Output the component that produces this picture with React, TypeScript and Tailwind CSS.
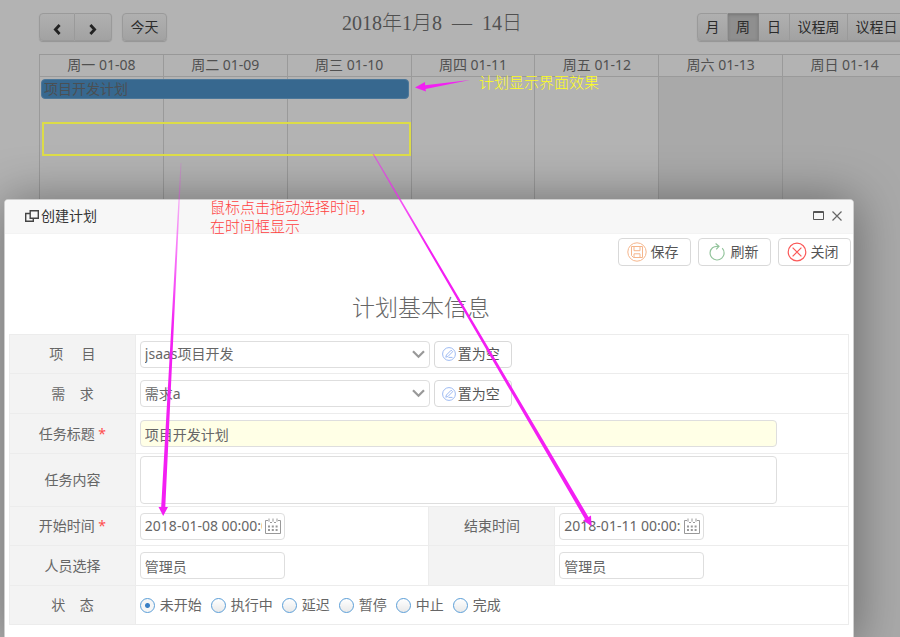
import React, { useState } from "react";

const FONT = "font-['Noto_Sans','Noto_Sans_CJK_SC',sans-serif]";

const DAYS = [
  "周一 01-08",
  "周二 01-09",
  "周三 01-10",
  "周四 01-11",
  "周五 01-12",
  "周六 01-13",
  "周日 01-14",
];

const VIEWS = ["月", "周", "日", "议程周", "议程日"];
const STATES = ["未开始", "执行中", "延迟", "暂停", "中止", "完成"];

const calButton =
  "flex h-7 items-center justify-center border-[#9a9a9a] bg-linear-to-b from-[#b0b0b0] to-[#a2a2a2] text-[#2b2b2b]";
const field =
  "rounded border border-[#dedede] bg-white text-sm text-[#666] outline-none";
const formButton =
  "flex items-center justify-center rounded-sm border border-[#d9d9d9] bg-white pr-1 text-sm text-[#555]";

function Calendar() {
  const [view, setView] = useState("周");
  return (
    <div className="-mr-[6px] ml-[39px] flex h-full flex-col pt-[13px]">
      <header className="mb-[13px] flex items-start justify-between">
        <div className="flex gap-[10px]">
          <div className="flex rounded shadow-[0_1px_1px_#949494]">
            <button aria-label="上一周" className={`${calButton} w-[36px] rounded-l border`}>
              <svg width="8" height="11" viewBox="0 0 8 11" className="mt-1" fill="none" stroke="#222" strokeWidth="2.8">
                <path d="M6.600 1 2.400 5.500l4.200 4.500" />
              </svg>
            </button>
            <button aria-label="下一周" className={`${calButton} w-[37px] rounded-r border border-l-0`}>
              <svg width="8" height="11" viewBox="0 0 8 11" className="mt-1" fill="none" stroke="#222" strokeWidth="2.8">
                <path d="M1.400 1l4.200 4.500-4.200 4.500" />
              </svg>
            </button>
          </div>
          <button className={`${calButton} w-[45px] rounded border text-sm shadow-[0_1px_1px_#949494]`}>
            今天
          </button>
        </div>
        <h2 className="font-['Liberation_Serif','Noto_Sans_CJK_SC',serif] text-xl leading-5 font-light whitespace-pre text-[#505050]">
          {"2018年1月8  —  14日"}
        </h2>
        <div className="flex rounded shadow-[0_1px_1px_#949494]">
          {VIEWS.map((v) => (
            <button
              key={v}
              onClick={() => setView(v)}
              className={`${
                v === view
                  ? "flex h-7 items-center justify-center border-[#858585] bg-[#8f8f8f] text-[#2b2b2b] shadow-[inset_0_1px_3px_#777]"
                  : calButton
              } ${v.length > 1 ? "w-[58px]" : "w-[31px]"} border-y border-r text-sm first:rounded-l first:border-l last:rounded-r`}
            >
              {v}
            </button>
          ))}
        </div>
      </header>

      <div className="grid flex-1 grid-cols-7 grid-rows-[22px_21px_1fr] border-t border-[#989898]">
        {DAYS.map((d, i) => (
          <div
            key={d}
            style={{ gridColumn: i + 1, gridRow: 1 }}
            className="border-b border-l border-[#9a9a9a] text-center text-sm leading-5 text-[#505050]"
          >
            {d}
          </div>
        ))}
        {DAYS.map((d, i) => (
          <div
            key={d}
            style={{ gridColumn: i + 1, gridRow: "2 / 4" }}
            className={`border-l border-[#9a9a9a] ${i > 4 ? "bg-[#a9a9a9]" : ""}`}
          />
        ))}
        <div className="col-span-3 col-start-1 row-start-2 mx-[2px] mt-[2px] h-5 rounded-sm border border-[#4c7799] bg-[#37688f] px-[2px] text-sm leading-[17px] text-[#4a4f54]">
          项目开发计划
        </div>
      </div>
    </div>
  );
}

function SaveIcon() {
  return (
    <svg width="20" height="20" viewBox="0 0 20 20" fill="none" stroke="#f5b68c">
      <circle cx="10" cy="10" r="9.2" />
      <path d="M4.500 4.500h11v11h-9l-2-2zM7 4.500v4.200h6V4.500M7 15.500v-3.700h6v3.700" />
    </svg>
  );
}

function RefreshIcon() {
  return (
    <svg width="20" height="20" viewBox="0 0 20 20" fill="none" stroke="#93c49c" strokeWidth="1.2">
      <path d="M15.200 6.200A7 7 0 1 1 5.500 5.700Q7.600 4 11.800 4.400" />
      <path d="M8.600 1.500l3.400 2.900-2.800 3" />
    </svg>
  );
}

function CloseIcon() {
  return (
    <svg width="20" height="20" viewBox="0 0 20 20" fill="none" stroke="#fb5a5a" strokeWidth="1.2">
      <circle cx="10" cy="10" r="8.8" />
      <path d="M5.600 5.600l8.800 8.800M14.400 5.600l-8.800 8.800" />
    </svg>
  );
}

function EditIcon() {
  return (
    <svg width="14" height="14" viewBox="0 0 14 14" fill="none" stroke="#9dbaf2">
      <circle cx="7" cy="7" r="6.4" />
      <path d="M3.800 10.200l.6-2.200 4.800-4.800 1.500 1.500-4.800 4.800zM6.500 10.400h4" />
    </svg>
  );
}

function CalendarIcon() {
  return (
    <svg width="16" height="16" viewBox="0 0 16 16" fill="none" stroke="#999">
      <path d="M3 2.500H.5v13h15v-13H13M5 4.500h2M9 4.500h2M4 .5v3.200M8 .5v3.200M12 .5v3.200" />
      <path d="M3 8.500h2m1.800 0h2m1.800 0h2M3 12h2m1.800 0h2m1.800 0h2" strokeWidth="1.8" />
    </svg>
  );
}

function SelectField({ id, value }: { id: string; value: string }) {
  return (
    <div className="flex gap-1">
      <div className="relative w-[290px]">
        <select id={id} defaultValue={value} className={`${field} h-[27px] w-full appearance-none pr-8 pl-1`}>
          <option>{value}</option>
        </select>
        <svg className="pointer-events-none absolute top-[9px] right-[5px]" width="13" height="9" viewBox="0 0 13 9" fill="none" stroke="#999" strokeWidth="2.2">
          <path d="M1 1.200l5.500 5.600L12 1.200" />
        </svg>
      </div>
      <button className={`${formButton} h-[27px] w-[78px] gap-[2px]`}>
        <EditIcon />
        置为空
      </button>
    </div>
  );
}

function DateField({ id, value }: { id: string; value: string }) {
  return (
    <div className={`${field} flex h-[27px] w-[145px] items-center justify-between pr-[3px] pl-1`}>
      <input id={id} defaultValue={value} className="w-[117px] min-w-0 outline-none" />
      <CalendarIcon />
    </div>
  );
}

const labelCell =
  "border border-[#ececec] bg-[#f3f3f3] p-0 text-center text-sm font-normal text-[#666]";
const cell = "border border-[#ececec] py-0 pr-0 pl-1";

function Required() {
  return <span className="text-[#ff4d4d]"> *</span>;
}

function PlanDialog() {
  const [state, setState] = useState("未开始");
  return (
    <section
      role="dialog"
      aria-label="创建计划"
      className="absolute top-[199px] right-[46px] -bottom-2 left-1 overflow-hidden rounded-sm border border-[#cfcfcf] bg-white shadow-[1px_1px_50px_rgba(0,0,0,0.4)]"
    >
      <div className="flex h-[34px] items-center border-b border-[#f3f3f3] bg-[#f7f7f7] pr-[11px] pb-[2px] pl-5 text-sm text-[#333]">
        <svg width="14" height="12" viewBox="0 0 14 12" fill="none" stroke="#444" strokeWidth="1.4" className="mr-[2px]">
          <path d="M5.200.7h8.100v7.500H5.200zM5.200 3.500H.7v7.800h7.600V8.200" />
        </svg>
        创建计划
        <div className="ml-auto flex items-center gap-2">
          <button aria-label="最大化">
            <svg width="11" height="9" viewBox="0 0 11 9" fill="none" stroke="#555">
              <path d="M.5.5h10v8H.5zM0 1.500h11" />
            </svg>
          </button>
          <button aria-label="关闭窗口">
            <svg width="10" height="10" viewBox="0 0 10 10" fill="none" stroke="#666" strokeWidth="1.2">
              <path d="M.5.5l9 9M9.500.5l-9 9" />
            </svg>
          </button>
        </div>
      </div>

      <div className="flex justify-end gap-[7px] pt-1 pr-[2px]">
        <button className={`${formButton} h-7 w-[73px] gap-1`}>
          <SaveIcon />
          保存
        </button>
        <button className={`${formButton} h-7 w-[73px] gap-1`}>
          <RefreshIcon />
          刷新
        </button>
        <button className={`${formButton} h-7 w-[73px] gap-1`}>
          <CloseIcon />
          关闭
        </button>
      </div>

      <h1 className="mt-[23px] mb-[9px] pr-4 text-center text-[23px] leading-9 font-light text-[#666]">
        计划基本信息
      </h1>

      <table className="mx-1 w-[calc(100%-8px)] table-fixed border-collapse">
        <colgroup>
          <col className="w-[15%]" />
          <col className="w-[35%]" />
          <col className="w-[15%]" />
          <col className="w-[35%]" />
        </colgroup>
        <tbody>
          <tr className="h-[39px]">
            <th className={labelCell}>
              <label htmlFor="project" className="whitespace-pre">{"项     目"}</label>
            </th>
            <td className={cell} colSpan={3}>
              <SelectField id="project" value="jsaas项目开发" />
            </td>
          </tr>
          <tr className="h-10">
            <th className={labelCell}>
              <label htmlFor="demand" className="whitespace-pre">{"需    求"}</label>
            </th>
            <td className={cell} colSpan={3}>
              <SelectField id="demand" value="需求a" />
            </td>
          </tr>
          <tr className="h-10">
            <th className={labelCell}>
              <label htmlFor="title">任务标题<Required /></label>
            </th>
            <td className={cell} colSpan={3}>
              <input
                id="title"
                defaultValue="项目开发计划"
                className="block h-[27px] w-[637px] rounded border border-[#dedede] bg-[#ffffe6] px-1 text-sm text-[#666] outline-none"
              />
            </td>
          </tr>
          <tr className="h-[53px]">
            <th className={labelCell}>
              <label htmlFor="content">任务内容</label>
            </th>
            <td className={cell} colSpan={3}>
              <textarea id="content" className={`${field} block h-12 w-[637px] resize-none px-1`} />
            </td>
          </tr>
          <tr className="h-[39px]">
            <th className={labelCell}>
              <label htmlFor="start">开始时间<Required /></label>
            </th>
            <td className={cell}>
              <DateField id="start" value="2018-01-08 00:00:00" />
            </td>
            <th className={labelCell}>
              <label htmlFor="end">结束时间</label>
            </th>
            <td className={cell}>
              <DateField id="end" value="2018-01-11 00:00:00" />
            </td>
          </tr>
          <tr className="h-10">
            <th className={labelCell}>
              <label htmlFor="owner">人员选择</label>
            </th>
            <td className={cell}>
              <input id="owner" defaultValue="管理员" className={`${field} block h-[27px] w-[145px] px-1`} />
            </td>
            <td className={labelCell} />
            <td className={cell}>
              <input aria-label="人员" defaultValue="管理员" className={`${field} block h-[27px] w-[145px] px-1`} />
            </td>
          </tr>
          <tr className="h-[39px]">
            <th className={labelCell}>
              <span className="whitespace-pre">{"状    态"}</span>
            </th>
            <td className={cell} colSpan={3}>
              <div role="radiogroup" aria-label="状态" className="flex gap-[9px]">
                {STATES.map((s) => (
                  <label key={s} className="flex items-center gap-[5px] text-sm text-[#666]">
                    <input
                      type="radio"
                      name="state"
                      checked={s === state}
                      onChange={() => setState(s)}
                      className="size-[15px] appearance-none rounded-full border border-[#5c9fd8] bg-linear-to-b from-white to-[#e9e9e9] checked:bg-[radial-gradient(circle,#3a7fc4_2px,#f6f6f6_3px)]"
                    />
                    {s}
                  </label>
                ))}
              </div>
            </td>
          </tr>
        </tbody>
      </table>
    </section>
  );
}

function Annotations() {
  return (
    <div className="pointer-events-none absolute inset-0">
      <div className="absolute top-[122px] left-[42px] h-[34px] w-[369px] border-2 border-[#dcdc48]" />
      <p className="absolute top-[73px] left-[479px] text-[15px] leading-[19px] font-light text-[#ffff1a]">
        计划显示界面效果
      </p>
      <p className="absolute top-[198px] left-[210px] text-[15px] leading-[19px] font-light text-[#ff4040]">
        鼠标点击拖动选择时间，
        <br />
        在时间框显示
      </p>
      <svg className="absolute top-0 left-0" width="900" height="637" viewBox="0 0 900 637">
        <defs>
          <linearGradient id="fadeA" gradientUnits="userSpaceOnUse" x1="181" y1="163" x2="174" y2="330">
            <stop offset="0" stopColor="#f31ff3" stopOpacity="0.15" />
            <stop offset="1" stopColor="#f31ff3" />
          </linearGradient>
          <linearGradient id="fadeB" gradientUnits="userSpaceOnUse" x1="373" y1="154" x2="430" y2="250">
            <stop offset="0" stopColor="#f31ff3" stopOpacity="0.5" />
            <stop offset="1" stopColor="#f31ff3" />
          </linearGradient>
        </defs>
        <path fill="#f31ff3" d="M470 80L425.500 89L426 91.500L415 87.500L425 82L425.200 85.200Z" />
        <path fill="url(#fadeA)" d="M180.500 163L181.500 163L165.300 507L168 507L163.200 516L158.500 507L161.200 507Z" />
        <path fill="url(#fadeB)" d="M372.500 154L374 154L588.500 517L591 515.500L591.500 526L583 520.500L585 519.200Z" />
      </svg>
    </div>
  );
}

export default function App() {
  return (
    <main className={`${FONT} relative h-screen overflow-hidden bg-[#b3b3b3]`}>
      <Calendar />
      <PlanDialog />
      <Annotations />
    </main>
  );
}
